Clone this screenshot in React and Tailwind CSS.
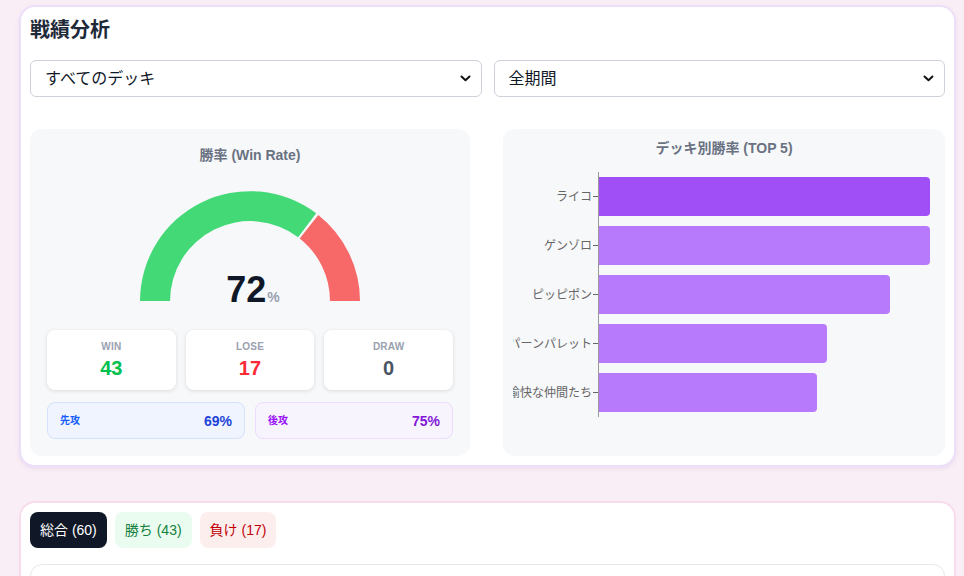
import React from 'react';

const font = { fontFamily: '"Liberation Sans", "Noto Sans CJK JP", sans-serif' };

const decks = [
    { name: 'ライコ', width: 331, top: true },
    { name: 'ゲンゾロ', width: 331 },
    { name: 'ピッピポン', width: 291 },
    { name: 'パーンパレット', width: 228 },
    { name: '愉快な仲間たち', width: 218 },
];

const Chevron = () => (
    <svg width="11" height="7" viewBox="0 0 11 7" fill="none">
        <path d="M1.5 1.5 L5.5 5.2 L9.5 1.5" stroke="#111" strokeWidth="2" strokeLinecap="round" strokeLinejoin="round" />
    </svg>
);

const FakeSelect = ({ label }) => (
    <div className="flex-1 h-[37px] flex items-center justify-between pl-[14px] pr-[10px] bg-white border border-[#cdd2da] rounded-md text-base text-gray-900">
        <span>{label}</span>
        <Chevron />
    </div>
);

const Gauge = () => (
    <div className="relative w-[220px] h-[110px] mx-auto">
        <svg width="220" height="110" viewBox="0 0 220 110">
            {/* win */}
            <path d="M 0 110 A 110 110 0 0 1 176.2 22.3 L 158.1 46.2 A 80 80 0 0 0 30 110 Z" fill="#43d977" />
            {/* lose */}
            <path d="M 178.3 23.9 A 110 110 0 0 1 220 110 L 190 110 A 80 80 0 0 0 159.7 47.4 Z" fill="#f76969" />
        </svg>
        <div className="absolute left-0 right-0 top-[80px] flex justify-center items-baseline pl-[6px]">
            <span className="text-[36px] leading-[38px] font-bold text-gray-900">72</span>
            <span className="text-sm font-bold text-gray-400 ml-[1px]">%</span>
        </div>
    </div>
);

const StatBox = ({ label, value, color }) => (
    <div className="h-[60px] bg-white rounded-lg shadow-[0_1px_4px_rgba(0,0,0,0.12)] flex flex-col items-center justify-center">
        <span className="text-[10px] leading-3 font-bold text-gray-400 tracking-wide">{label}</span>
        <span className={`text-xl leading-6 font-bold mt-[3px] ${color}`}>{value}</span>
    </div>
);

export default function App() {
    return (
        <div className="h-[576px] bg-[#f9eef5] pt-[5px] pl-[19px] pr-[8px] overflow-hidden" style={font}>
            {/* Stats card */}
            <div className="bg-white border-2 border-[#ecdffa] rounded-2xl shadow-[0_2px_4px_rgba(160,120,220,0.15)] p-[9px]">
                <h1 className="text-xl leading-7 font-bold text-gray-800 mb-4">戦績分析</h1>
                <div className="flex gap-3">
                    <FakeSelect label="すべてのデッキ" />
                    <FakeSelect label="全期間" />
                </div>

                <div className="flex gap-[33px] mt-8">
                    {/* win rate */}
                    <div className="w-[440px] h-[327px] bg-[#f7f8fa] rounded-xl px-[17px] pt-[16px]">
                        <h2 className="text-[14px] leading-5 font-bold text-gray-500 text-center">勝率 (Win Rate)</h2>
                        <div className="mt-[26px]">
                            <Gauge />
                        </div>
                        <div className="grid grid-cols-3 gap-[10px] mt-[29px]">
                            <StatBox label="WIN" value="43" color="text-[#00c04e]" />
                            <StatBox label="LOSE" value="17" color="text-[#fb2c36]" />
                            <StatBox label="DRAW" value="0" color="text-gray-600" />
                        </div>
                        <div className="grid grid-cols-2 gap-[10px] mt-3">
                            <div className="h-[37px] flex items-center justify-between px-3 rounded-lg bg-[#eff4fe] border border-[#d4e2fd]">
                                <span className="text-[10px] font-bold text-blue-600">先攻</span>
                                <span className="text-sm font-bold text-[#1d43d8]">69%</span>
                            </div>
                            <div className="h-[37px] flex items-center justify-between px-3 rounded-lg bg-[#f8f4fd] border border-[#eedbfd]">
                                <span className="text-[10px] font-bold text-purple-600">後攻</span>
                                <span className="text-sm font-bold text-[#8317d8]">75%</span>
                            </div>
                        </div>
                    </div>

                    {/* deck ranking */}
                    <div className="flex-1 h-[327px] bg-[#f7f8fa] rounded-xl pt-[9px] pl-[10px]">
                        <h2 className="text-[14px] leading-5 font-bold text-gray-500 text-center pr-[10px]">デッキ別勝率 (TOP 5)</h2>
                        <div className="flex mt-[14px]">
                            <div className="flex flex-col">
                                {decks.map(d => (
                                    <div key={d.name} className="h-[49px] flex items-center">
                                        <div className="w-[79px] overflow-hidden flex justify-end">
                                            <span className="text-xs text-[#666] whitespace-nowrap">{d.name}</span>
                                        </div>
                                        <div className="w-[5px] h-px bg-[#666] ml-[1px]" />
                                    </div>
                                ))}
                            </div>
                            <div className="flex flex-col border-l-[1.5px] border-[#999]">
                                {decks.map(d => (
                                    <div key={d.name} className="h-[49px] flex items-center">
                                        <div
                                            className={`h-[39px] rounded-r-[4px] ${d.top ? 'bg-[#a04ef5]' : 'bg-[#b87afc]'}`}
                                            style={{ width: d.width }}
                                        />
                                    </div>
                                ))}
                            </div>
                        </div>
                    </div>
                </div>
            </div>

            {/* History card */}
            <div className="mt-[34px] bg-white border-2 border-[#f8dcec] rounded-2xl p-[9px] h-[120px]">
                <div className="flex gap-2">
                    <button className="h-9 px-[10px] rounded-lg bg-[#101828] text-white text-sm">総合 (60)</button>
                    <button className="h-9 px-[10px] rounded-lg bg-[#eafcf0] text-[#15803d] text-sm">勝ち (43)</button>
                    <button className="h-9 px-[10px] rounded-lg bg-[#fdeeee] text-[#c10007] text-sm">負け (17)</button>
                </div>
                <div className="mt-4 h-20 border border-gray-200 rounded-xl" />
            </div>
        </div>
    );
}
